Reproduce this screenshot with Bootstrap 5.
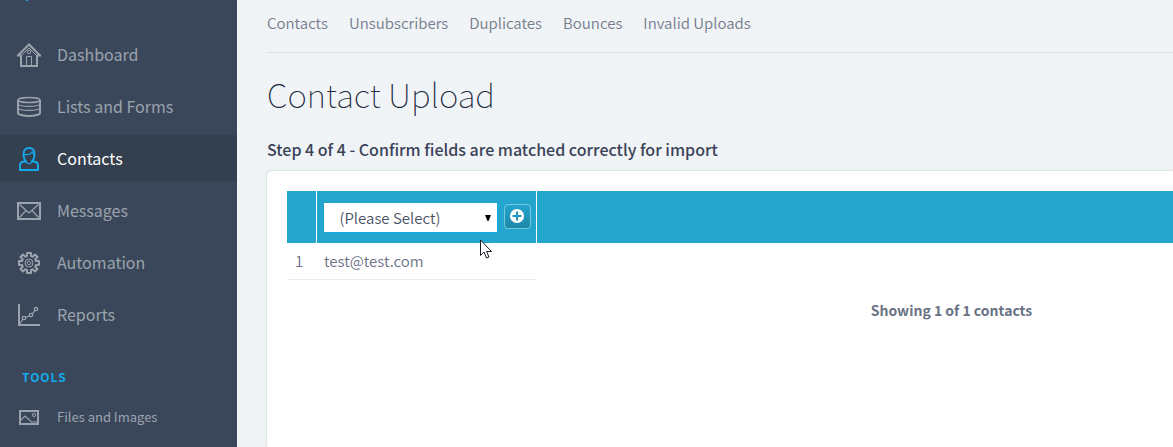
<!DOCTYPE html>
<html lang="en">
<head>
<meta charset="utf-8">
<meta name="viewport" content="width=device-width, initial-scale=1">
<title>Contact Upload</title>
<link href="https://cdn.jsdelivr.net/npm/bootstrap@5.3.0/dist/css/bootstrap.min.css" rel="stylesheet">
<style>
  body { font-family: "Source Sans Pro", "Noto Sans CJK SC", sans-serif; background: #f0f4f7; color: #6a7285; font-size: 14px; line-height: 20px; }
  a { text-decoration: none; }
  .sidebar { width: 237px; background: #3a475a; }
  .side-link { height: 47px; margin-bottom: 5px; padding-left: 17px; gap: 16px; font-size: 16px; color: #9ba3ad; }
  .side-link span { padding-bottom: 2px; }
  .side-link svg { width: 24px; height: 24px; fill: none; stroke: currentColor; flex: none; }
  .side-link.current { background: #343f4f; color: #fff; }
  .side-link.current svg { color: #14aaeb; }
  .side-link.minor { font-size: 13px; height: 40px; margin: 0; }
  .side-link.minor span { padding: 0; }
  .logo-tip { width: 2px; height: 1px; margin-left: 26px; margin-bottom: 30px; background: #14aaeb; }
  .side-title { color: #14aaeb; font-size: 12px; letter-spacing: 1px; margin: 29px 0 10px 22px; line-height: 20px; }
  .content { padding-left: 30px; min-width: 0; }
  .light-text { font-family: "Source Sans Pro", "Noto Sans CJK SC DemiLight", "Noto Sans CJK SC", sans-serif; font-weight: 350; font-size: 15px; }
  .tabs-row { gap: 21px; height: 53px; padding-bottom: 7px; border-bottom: 1px solid #d9dde2; }
  .tabs-row a { color: #757c8c; }
  .page-title { font-family: "Source Sans Pro", "Noto Sans CJK SC Thin", "Noto Sans CJK SC", sans-serif; font-size: 33px; line-height: 44px; font-weight: 100; color: #20283c; margin: 19px 0 23px; }
  .step { font-size: 16px; line-height: 20px; font-weight: 500; color: #3a4358; margin: 0 0 12px; }
  .panel { background: #fff; border-radius: 5px 0 0 0; box-shadow: 0 0 2px rgba(40,55,75,.35); padding: 20px 0 0 20px; }
  .fields { table-layout: fixed; }
  .fields th { background: #23a5cd; height: 52px; padding: 2px 0 0 7px; border-right: 1px solid #fff; }
  .fields th:last-child { border-right: 0; }
  .fields td { height: 36px; padding: 0 8px; border-bottom: 1px solid #ececee; color: #6a7285; }
  .fields td:last-child { border-bottom: 0; }
  .c-num { width: 29px; }
  .c-map { width: 220px; }
  .map-select { width: 174px; height: 30px; border: 1px solid #16a9df; border-width: 0 1px 1px 0; background: #fff; color: #4b5266; padding: 0 16px; appearance: none; line-height: 28px; }
  .select-arrow { right: 7px; top: 12px; pointer-events: none; }
  .add-btn { width: 27px; height: 25px; margin: 0 0 4px 6px; border: 1px solid #73c8e0; border-radius: 4px; background: linear-gradient(#23a5cd, #1e87a8); }
  .pointer { left: 480px; top: 239px; pointer-events: none; }
</style>
</head>
<body>
<div class="d-flex min-vh-100 overflow-hidden">
  <nav class="sidebar flex-shrink-0" aria-label="Main">
    <div class="logo-tip"></div>
    <a href="#" class="side-link d-flex align-items-center">
      <svg viewBox="0 0 24 24"><path d="M1 12.500L12 1.500l11 11M0 12.500h4M20 12.500h4" stroke-width="2"/><path d="M4 12v11h16V12" stroke-width="2"/><path d="M4.500 12.500L12 5l7.500 7.500M9.500 22v-8.500h5V22"/><circle cx="12" cy="9" r="1.700"/></svg>
      <span>Dashboard</span></a>
    <a href="#" class="side-link d-flex align-items-center">
      <svg viewBox="0 0 24 24"><path d="M1 5v13c0 1.500 5 3 11 3s11-1.500 11-3V5" stroke-width="2"/><ellipse cx="12" cy="5" rx="11" ry="2.600" stroke-width="1.500"/><path d="M1 9c1 1.500 5 2.300 11 2.300S22 10.500 23 9M1 13c1 1.500 5 2.300 11 2.300s10-.800 11-2.300" stroke-width="1.300"/></svg>
      <span>Lists and Forms</span></a>
    <a href="#" class="side-link current d-flex align-items-center" aria-current="page">
      <svg viewBox="0 0 24 24"><path d="M9.500 14.500C7 13 6.500 10.500 6.500 7c0-3.500 2-6 5.500-6s5.500 2.500 5.500 6c0 3.500-.5 6-3 7.500M9.500 14.500H8c-3 0-5 1-5 4V23h18v-4.500c0-3-2-4-5-4h-1.500" stroke-width="1.900"/><path d="M7 7.500c3.500.500 7-.500 8-2.500.5 1 1.200 1.500 2 2M9 14.500c1 3 5 3 6 0" stroke-width="1.200"/></svg>
      <span>Contacts</span></a>
    <a href="#" class="side-link d-flex align-items-center">
      <svg viewBox="0 0 24 24"><rect x="1" y="4" width="22" height="16" stroke-width="2"/><path d="M2.500 5.500L12 14l9.500-8.500M2.500 18.500L9 11.500M21.500 18.500L15 11.500" stroke-width="1.200"/></svg>
      <span>Messages</span></a>
    <a href="#" class="side-link d-flex align-items-center">
      <svg viewBox="0 0 24 24"><path d="M10 2h4v3l1.700.700L18 3.500 20.500 6l-2.200 2.300.7 1.700h3v4h-3l-.7 1.700 2.200 2.300-2.500 2.500-2.300-2.200-1.700.7v3h-4v-3l-1.700-.7L6 20.500 3.500 18l2.200-2.300L5 14H2v-4h3l.7-1.700L3.500 6 6 3.500l2.300 2.200L10 5z" stroke-width="2" stroke-linejoin="round"/><circle cx="12" cy="12" r="4"/><circle cx="12" cy="12" r="1.800"/></svg>
      <span>Automation</span></a>
    <a href="#" class="side-link d-flex align-items-center">
      <svg viewBox="0 0 24 24"><path d="M2 1v21h21" stroke-width="2"/><path d="M3 20.500L6 16M8.500 14.500l4-1.500M15.300 10.800l3.200-4" stroke-width="1.200"/><circle cx="7" cy="15" r="1.700" stroke-width="1.300"/><circle cx="14" cy="12" r="1.700" stroke-width="1.300"/><circle cx="19" cy="6" r="1.700" stroke-width="1.300"/></svg>
      <span>Reports</span></a>
    <h2 class="side-title fw-bold">TOOLS</h2>
    <a href="#" class="side-link minor d-flex align-items-center">
      <svg viewBox="0 0 24 24"><rect x="3" y="6" width="18" height="13" stroke-width="2"/><path d="M4 15l4-4 6.500 6H20" stroke-width="1.200"/><circle cx="17" cy="10" r="1.600"/></svg>
      <span>Files and Images</span></a>
  </nav>

  <main class="content flex-grow-1 d-flex flex-column">
    <nav class="tabs-row light-text d-flex align-items-center" aria-label="Contacts">
      <a href="#">Contacts</a>
      <a href="#">Unsubscribers</a>
      <a href="#">Duplicates</a>
      <a href="#">Bounces</a>
      <a href="#">Invalid Uploads</a>
    </nav>
    <h1 class="page-title">Contact Upload</h1>
    <h2 class="step">Step 4 of 4 - Confirm fields are matched correctly for import</h2>
    <section class="panel flex-grow-1">
      <table class="fields w-100">
        <thead>
          <tr>
            <th class="c-num"></th>
            <th class="c-map">
              <div class="d-flex align-items-center">
                <div class="position-relative">
                  <select class="map-select light-text rounded-0 d-block" aria-label="Field for column 1"><option>(Please Select)</option></select>
                  <svg class="select-arrow position-absolute" width="6" height="6" viewBox="0 0 6 6"><path d="M0 0h6L3.500 6h-1z" fill="#000"/></svg>
                </div>
                <button type="button" class="add-btn d-flex align-items-center justify-content-center p-0" aria-label="Add field">
                  <svg width="14" height="14" viewBox="0 0 14 14"><circle cx="7" cy="7" r="7" fill="#fff"/><path d="M7 2.500v9M2.500 7h9" stroke="#1f97bc" stroke-width="2"/></svg>
                </button>
              </div>
            </th>
            <th></th>
          </tr>
        </thead>
        <tbody class="light-text">
          <tr><td>1</td><td>test@test.com</td><td></td></tr>
        </tbody>
      </table>
      <div class="row g-0 pt-3 mt-1">
        <p class="col-6 offset-6 text-center fw-bold mb-0">Showing 1 of 1 contacts</p>
      </div>
    </section>
  </main>
</div>
<svg class="pointer position-absolute" width="12" height="20" viewBox="0 0 12 20"><path d="M.5 1v15.500L4 13l2.500 6 2.500-1-2.500-5.500h5z" fill="#fff" stroke="#1b1b2b"/></svg>
<script src="https://cdn.jsdelivr.net/npm/bootstrap@5.3.0/dist/js/bootstrap.bundle.min.js"></script>
</body>
</html>
